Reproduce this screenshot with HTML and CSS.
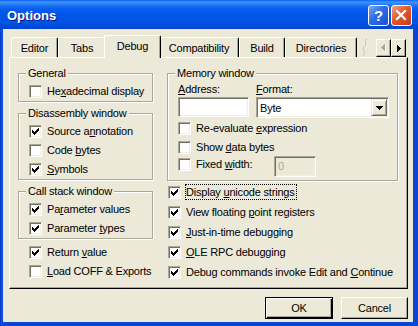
FILE: index.html
```html
<!DOCTYPE html>
<html lang="en">
<head>
    <meta charset="UTF-8">
    <meta name="viewport" content="width=device-width, initial-scale=1.0">
    <title>Options</title>
    <link rel="stylesheet" href="styles.css">
</head>
<body>
    <svg class="defs" width="0" height="0">
        <symbol id="tick" viewBox="0 0 7 7">
            <path d="M6 0h1v1H6zM5 1h2v1H5zM0 2h1v1H0zM4 2h3v1H4zM0 3h2v1H0zM3 3h3v1H3zM0 4h5v1H0zM1 5h3v1H1zM2 6h1v1H2z"/>
        </symbol>
    </svg>

    <div class="window">
        <div class="titlebar">
            <span class="title">Options</span>
            <div class="caption-btns">
                <span class="cap-btn help">?</span>
                <span class="cap-btn close">
                    <svg width="19" height="19" viewBox="0 0 19 19">
                        <path d="M5 5L13 13M13 5L5 13" stroke="#fff" stroke-width="2.2" stroke-linecap="square"/>
                    </svg>
                </span>
            </div>
        </div>

        <div class="client">
            <div class="tabstrip">
                <div class="tab tab-editor">Editor</div>
                <div class="tab tab-tabs">Tabs</div>
                <div class="tab tab-debug active">Debug</div>
                <div class="tab tab-compat">Compatibility</div>
                <div class="tab tab-build">Build</div>
                <div class="tab tab-dirs">Directories</div>
                <svg class="torn" width="16" height="19" viewBox="0 0 16 19">
                    <path d="M9 1C5 3 10 6 6 9C3 11 9 14 5 18" fill="none" stroke="#B9B6A6" stroke-dasharray="2 1"/>
                </svg>
                <div class="scroller">
                    <span class="scroll-btn">
                        <svg width="5" height="8" viewBox="0 0 5 8">
                            <path d="M4 1h1v7H4zM3 2h1v5H3zM2 3h1v3H2zM1 4h1v1H1z" fill="#fff"/>
                            <path d="M3 0h1v7H3zM2 1h1v5H2zM1 2h1v3H1zM0 3h1v1H0z" fill="#ACA899"/>
                        </svg>
                    </span>
                    <span class="scroll-btn">
                        <svg width="4" height="7" viewBox="0 0 4 7">
                            <path d="M0 0h1v7H0zM1 1h1v5H1zM2 2h1v3H2zM3 3h1v1H3z"/>
                        </svg>
                    </span>
                </div>
            </div>

            <div class="panel">
                <div class="col col-left">
                    <div class="group">
                        <div class="group-title">General</div>
                        <div class="check"><span class="box"></span><span class="text">He<u>x</u>adecimal display</span></div>
                    </div>
                    <div class="group">
                        <div class="group-title">Disassembly window</div>
                        <div class="check"><span class="box"><svg><use href="#tick"/></svg></span><span class="text">Source a<u>n</u>notation</span></div>
                        <div class="check"><span class="box"></span><span class="text">Code <u>b</u>ytes</span></div>
                        <div class="check"><span class="box"><svg><use href="#tick"/></svg></span><span class="text"><u>S</u>ymbols</span></div>
                    </div>
                    <div class="group">
                        <div class="group-title">Call stack window</div>
                        <div class="check"><span class="box"><svg><use href="#tick"/></svg></span><span class="text">Pa<u>r</u>ameter values</span></div>
                        <div class="check"><span class="box"><svg><use href="#tick"/></svg></span><span class="text">Parameter <u>t</u>ypes</span></div>
                    </div>
                    <div class="check"><span class="box"><svg><use href="#tick"/></svg></span><span class="text">Return <u>v</u>alue</span></div>
                    <div class="check"><span class="box"></span><span class="text"><u>L</u>oad COFF &amp; Exports</span></div>
                </div>

                <div class="col col-right">
                    <div class="group memory">
                        <div class="group-title">Memory window</div>
                        <div class="mem-fields">
                            <div class="field field-address">
                                <div class="field-label"><u>A</u>ddress:</div>
                                <div class="textbox"></div>
                            </div>
                            <div class="field field-format">
                                <div class="field-label"><u>F</u>ormat:</div>
                                <div class="combo">
                                    <span>Byte</span>
                                    <span class="combo-btn">
                                        <svg width="7" height="4" viewBox="0 0 7 4">
                                            <path d="M0 0h7v1H0zM1 1h5v1H1zM2 2h3v1H2zM3 3h1v1H3z"/>
                                        </svg>
                                    </span>
                                </div>
                            </div>
                        </div>
                        <div class="check"><span class="box"></span><span class="text">Re-evaluate <u>e</u>xpression</span></div>
                        <div class="check short"><span class="box"></span><span class="text">Show <u>d</u>ata bytes</span></div>
                        <div class="check fixed">
                            <span class="box"></span>
                            <span class="text fixed-label">Fixed <u>w</u>idth:</span>
                            <div class="textbox disabled">0</div>
                        </div>
                    </div>
                    <div class="check"><span class="box"><svg><use href="#tick"/></svg></span><span class="text focus">Display <u>u</u>nicode strings</span></div>
                    <div class="check"><span class="box"><svg><use href="#tick"/></svg></span><span class="text">View floating <u>p</u>oint registers</span></div>
                    <div class="check"><span class="box"><svg><use href="#tick"/></svg></span><span class="text"><u>J</u>ust-in-time debugging</span></div>
                    <div class="check"><span class="box"><svg><use href="#tick"/></svg></span><span class="text"><u>O</u>LE RPC debugging</span></div>
                    <div class="check"><span class="box"><svg><use href="#tick"/></svg></span><span class="text">Debug commands invoke Edit and <u>C</u>ontinue</span></div>
                </div>
            </div>

            <div class="buttons">
                <div class="btn btn-ok default">OK</div>
                <div class="btn btn-cancel">Cancel</div>
            </div>
        </div>
    </div>
</body>
</html>
```

FILE: styles.css
```css
/* Reset */
* {
    margin: 0;
    padding: 0;
    box-sizing: border-box;
}

body {
    width: 418px;
    height: 326px;
    overflow: hidden;
    font-family: "Liberation Sans", Arial, sans-serif;
    font-size: 11px;
    letter-spacing: -0.2px;
    color: #000;
    background: #0A46D6;
}

.defs {
    display: block;
    width: 0;
    height: 0;
    overflow: hidden;
}

/* Window frame */
.window {
    display: flex;
    flex-direction: column;
    height: 326px;
    background: linear-gradient(to right, #0836C8, #0D55E4 2px, #0A46D6 3px);
}

.titlebar {
    height: 29px;
    display: flex;
    align-items: center;
    padding: 0 6px 0 7px;
    background: linear-gradient(to bottom, #0A5CF0 0, #3D95FF 2px, #2A82F7 4px, #0B5FF0 8px, #0057E8 14px, #0053E3 22px, #0049D8 27px, #0041CE 29px);
}

.title {
    flex: 1;
    color: #fff;
    font-weight: bold;
    font-size: 13px;
    letter-spacing: 0;
    text-shadow: 1px 1px 0 #0A1C8A;
    margin-top: 1px;
}

.caption-btns {
    display: flex;
    gap: 2px;
    align-self: flex-start;
    margin-top: 5px;
}

.cap-btn {
    width: 21px;
    height: 21px;
    border: 1px solid #fff;
    border-radius: 3px;
    display: flex;
    align-items: center;
    justify-content: center;
}

.help {
    background: linear-gradient(135deg, #7AA8F8 0%, #2D6AE6 45%, #1B52D2 100%);
    color: #fff;
    font-weight: bold;
    font-size: 15px;
    letter-spacing: 0;
}

.close {
    background: linear-gradient(135deg, #F2A084 0%, #E0582F 45%, #C83C15 100%);
}

.close svg {
    display: block;
}

/* Client area */
.client {
    flex: 1;
    margin: 0 5px 4px 3px;
    padding: 6px 5px 3px 6px;
    background: #ECE9D8;
    display: flex;
    flex-direction: column;
}

/* Tabs */
.tabstrip {
    display: flex;
    align-items: flex-end;
    height: 22px;
    width: 399px;
    padding-left: 2px;
}

.tab {
    height: 20px;
    display: flex;
    align-items: center;
    justify-content: center;
    border-top: 1px solid #fff;
    border-left: 1px solid #fff;
    border-right: 1px solid #000;
    border-radius: 2px 2px 0 0;
    box-shadow: inset -1px 0 0 #ACA899;
    background: #ECE9D8;
    white-space: nowrap;
}

.tab.active {
    height: 23px;
    margin: 0 -2px -1px;
    position: relative;
    z-index: 1;
    padding-bottom: 2px;
}

.tab-editor { width: 47px; }
.tab-tabs { width: 48px; }
.tab-debug { width: 57px; }
.tab-compat { width: 80px; }
.tab-build { width: 46px; }
.tab-dirs { width: 72px; }

.torn {
    display: block;
    margin-left: 1px;
}

.scroller {
    display: flex;
    margin-left: auto;
    margin-right: 2px;
    align-self: flex-start;
    margin-top: 4px;
}

.scroll-btn {
    width: 15px;
    height: 18px;
    display: flex;
    align-items: center;
    justify-content: center;
    background: #ECE9D8;
    border: 1px solid;
    border-color: #fff #000 #000 #fff;
    box-shadow: inset -1px -1px 0 #ACA899;
}

.scroll-btn svg {
    display: block;
}

/* Tab page */
.panel {
    width: 399px;
    height: 232px;
    border-top: 1px solid #fff;
    border-left: 1px solid #fff;
    border-right: 1px solid #000;
    border-bottom: 1px solid #000;
    box-shadow: inset -1px -1px 0 #ACA899;
    padding: 15px 0 0 8px;
    display: grid;
    grid-template-columns: 135px 231px;
    column-gap: 14px;
    align-items: start;
}

.col {
    display: flex;
    flex-direction: column;
}

/* Group boxes */
.group {
    border: 1px solid #ACA899;
    box-shadow: inset 1px 1px 0 #fff, 1px 1px 0 #fff;
    padding-left: 10px;
}

.group + .group {
    margin-top: 11px;
}

.group-title {
    width: fit-content;
    height: 14px;
    line-height: 14px;
    margin: -8px 0 2px -3px;
    padding: 0 2px;
    background: #ECE9D8;
    white-space: nowrap;
}

/* Checkboxes */
.check {
    display: flex;
    align-items: flex-start;
    height: 19px;
    padding-top: 3px;
    white-space: nowrap;
}

.box {
    flex: none;
    width: 13px;
    height: 13px;
    padding: 2px;
    margin-right: 5px;
    background: #fff;
    border: 1px solid;
    border-color: #ACA899 #fff #fff #ACA899;
    box-shadow: inset 1px 1px 0 #716F64, inset -1px -1px 0 #F1EFE2;
}

.box svg {
    display: block;
    width: 7px;
    height: 7px;
}

.text {
    line-height: 13px;
}

.col-left > .check {
    padding-left: 11px;
}

.col-left > .group + .check {
    margin-top: 4px;
}

.col-right > .check {
    height: 20px;
    padding-left: 1px;
}

.col-right > .group + .check {
    margin-top: 2px;
}

.focus {
    border: 1px dotted #000;
    line-height: 14px;
    margin: -2px 0 0 -1px;
    padding-right: 1px;
}

/* Memory window */
.memory {
    padding: 0 8px 3px 10px;
}

.mem-fields {
    display: flex;
    gap: 7px;
    margin: 1px 0 1px;
}

.field-label {
    line-height: 14px;
    margin-bottom: 1px;
}

.textbox {
    width: 71px;
    height: 20px;
    background: #fff;
    border: 1px solid;
    border-color: #ACA899 #fff #fff #ACA899;
    box-shadow: inset 1px 1px 0 #716F64, inset -1px -1px 0 #F1EFE2;
}

.combo {
    width: 133px;
    height: 21px;
    display: flex;
    align-items: center;
    justify-content: space-between;
    padding-left: 3px;
    background: #fff;
    border: 1px solid;
    border-color: #ACA899 #fff #fff #ACA899;
    box-shadow: inset 1px 1px 0 #716F64, inset -1px -1px 0 #F1EFE2;
}

.combo-btn {
    width: 16px;
    height: 17px;
    margin-right: 1px;
    display: flex;
    align-items: center;
    justify-content: center;
    background: #ECE9D8;
    border: 1px solid;
    border-color: #ECE9D8 #716F64 #716F64 #ECE9D8;
    box-shadow: inset 1px 1px 0 #fff, inset -1px -1px 0 #ACA899;
}

.combo-btn svg {
    display: block;
}

.check.short {
    height: 18px;
}

.check.fixed {
    height: 21px;
    padding-top: 0;
}

.check.fixed .box,
.fixed-label {
    margin-top: 2px;
}

.fixed-label {
    width: 78px;
}

.textbox.disabled {
    width: 42px;
    height: 21px;
    background: #ECE9D8;
    color: #ACA899;
    line-height: 19px;
    padding-left: 3px;
}

/* Dialog buttons */
.buttons {
    width: 399px;
    display: flex;
    justify-content: flex-end;
    gap: 8px;
    margin-top: 8px;
}

.btn {
    height: 22px;
    display: flex;
    align-items: center;
    justify-content: center;
    background: #ECE9D8;
    border: 1px solid;
    border-color: #fff #000 #000 #fff;
    box-shadow: inset -1px -1px 0 #ACA899;
}

.btn-ok { width: 68px; }
.btn-cancel { width: 67px; }

.btn.default {
    border-color: #000;
    box-shadow: inset 1px 1px 0 #fff, inset -1px -1px 0 #000, inset -2px -2px 0 #ACA899;
}
```
